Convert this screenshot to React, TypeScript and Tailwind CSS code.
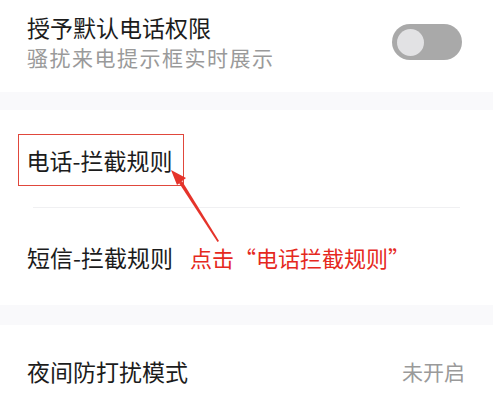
import React from "react";

const font = { fontFamily: '"Noto Sans CJK SC", "Noto Sans", sans-serif' };

export default function App() {
  return (
    <div
      className="relative w-[493px] h-[417px] overflow-hidden bg-white text-[#222]"
      style={font}
    >
      {/* Row 1 */}
      <div className="flex h-[92px] items-start justify-between pl-[27px] pr-[31px] pt-[12px]">
        <div className="flex flex-col">
          <div className="text-[23px] leading-[30px] text-[#1c1c1c]">授予默认电话权限</div>
          <div className="text-[21px] leading-[30px] tracking-[1.5px] text-[#9a9a9a]">
            骚扰来电提示框实时展示
          </div>
        </div>
        <div className="mt-[12px] flex h-[36px] w-[70px] items-center rounded-full bg-[#a9a9a9] pl-[5px]">
          <div className="h-[27px] w-[27px] rounded-full bg-[#e2e2e4]" />
        </div>
      </div>

      <div className="h-[18px] bg-[#f9f9fb]" />

      {/* Row 2 */}
      <div className="flex h-[97px] items-center pl-[18px]">
        <span className="mt-[3px] inline-block border-[1.5px] border-[#e0473c] py-[10px] pl-[7.5px] pr-[11px] text-[23px] leading-[30px] text-[#1c1c1c]">
          电话-拦截规则
        </span>
      </div>

      <div className="mx-[33px] h-px bg-[#f0f0f2]" />

      {/* Row 3 */}
      <div className="flex h-[97px] items-center pl-[27px]">
        <span className="text-[23px] leading-[30px] text-[#1c1c1c]">短信-拦截规则</span>
        <span className="ml-[17px] text-[22px] leading-[30px] text-[#e5291e]">
          点击“电话拦截规则”
        </span>
      </div>

      <div className="h-[20px] bg-[#f9f9fb]" />

      {/* Row 4 */}
      <div className="flex h-[92px] items-center justify-between pl-[27px] pr-[28px]">
        <span className="text-[23px] leading-[30px] text-[#1c1c1c]">夜间防打扰模式</span>
        <span className="text-[21px] leading-[30px] text-[#9a9a9a]">未开启</span>
      </div>

      {/* Arrow */}
      <svg
        className="pointer-events-none absolute left-0 top-0"
        width="493"
        height="417"
        viewBox="0 0 493 417"
      >
        <polygon points="219,241 217.5,242 179,183 182,181" fill="#e5332a" />
        <polygon points="171,170 186,178 177,185" fill="#e5332a" />
      </svg>
    </div>
  );
}
